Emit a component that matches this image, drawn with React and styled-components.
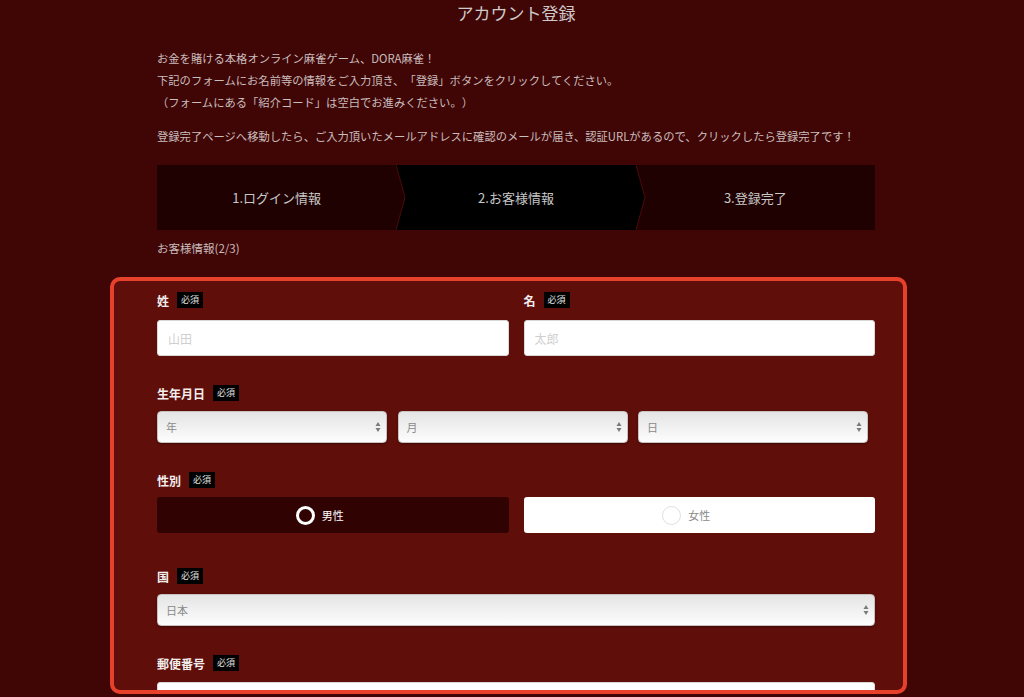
import React from 'react';
import styled, { createGlobalStyle } from 'styled-components';

const GlobalStyle = createGlobalStyle`
  body {
    margin: 0;
    background: #400606;
    font-family: "Noto Sans CJK JP", "Noto Sans", sans-serif;
    text-spacing-trim: space-all;
  }
`;

const Page = styled.div`
  padding-left: 8px;
`;

const Container = styled.main`
  width: 718px;
  margin: 0 auto;
`;

const Title = styled.h1`
  margin: 0;
  padding-top: 2px;
  font-size: 17px;
  line-height: 22px;
  font-weight: normal;
  color: #cfcaca;
  text-align: center;
`;

const Intro = styled.div`
  margin-top: 23px;
  p {
    margin: 0;
    font-size: 11.3px;
    line-height: 22px;
    color: #cabdbd;
  }
  p + p {
    margin-top: 12px;
  }
`;

const Steps = styled.ol`
  display: flex;
  height: 65px;
  margin: 18px 0 0;
  padding: 0;
  list-style: none;
`;

const Step = styled.li`
  position: relative;
  flex: 1;
  display: flex;
  align-items: center;
  justify-content: center;
  background: ${(p) => p.$bg};
  color: #c8c8c8;
  font-size: 13px;
`;

const Tip = styled.svg`
  position: absolute;
  top: 0;
  right: -10px;
  z-index: 1;
`;

const SubHeading = styled.div`
  margin-top: 10px;
  font-size: 11.5px;
  line-height: 16px;
  color: #cabdbd;
`;

const Panel = styled.form`
  position: relative;
  box-sizing: border-box;
  height: 417px;
  margin: 21px -32px 0 -47px;
  padding: 15px 32px 0 47px;
  background: #5f0e09;
  border-radius: 10px;
  &::after {
    content: '';
    position: absolute;
    inset: 0;
    border: 4px solid #e8412b;
    border-radius: 10px;
    pointer-events: none;
    z-index: 2;
  }
`;

const Field = styled.div`
  margin-bottom: ${(p) => p.$gap || 29}px;
`;

const LabelRow = styled.div`
  display: flex;
  align-items: center;
  gap: 8px;
  height: 16px;
  margin-bottom: ${(p) => p.$space || 10}px;
`;

const Label = styled.label`
  font-size: 12px;
  font-weight: bold;
  color: #f2eeee;
`;

const Badge = styled.span`
  height: 16px;
  line-height: 16px;
  padding: 0 4px;
  background: #000;
  color: #e0e0e0;
  font-size: 9px;
`;

const Pair = styled.div`
  display: grid;
  grid-template-columns: 1fr 1fr;
  gap: 15px;
`;

const Triple = styled.div`
  display: grid;
  grid-template-columns: repeat(3, 230px);
  gap: 10.5px;
`;

const TextInput = styled.input`
  box-sizing: border-box;
  width: 100%;
  height: 36px;
  padding: 0 10px;
  border: 1px solid #d8d8d8;
  border-radius: 3px;
  background: #fff;
  font-family: inherit;
  font-size: 12px;
  color: #333;
  outline: none;
  &::placeholder {
    color: #cfcfcf;
  }
`;

const SelectWrap = styled.div`
  position: relative;
`;

const Select = styled.select`
  box-sizing: border-box;
  width: 100%;
  height: 32px;
  padding: 0 20px 0 8px;
  appearance: none;
  border: 1px solid #c9c0c0;
  border-radius: 4px;
  background: linear-gradient(#e4e4e4, #fdfdfd);
  box-shadow: 0 1px 2px rgba(0, 0, 0, 0.35);
  font-family: inherit;
  font-size: 11px;
  color: #8a8a8a;
`;

const Arrows = styled.svg`
  position: absolute;
  right: 6px;
  top: 50%;
  transform: translateY(-50%);
  pointer-events: none;
`;

const RadioOption = styled.label`
  display: flex;
  align-items: center;
  justify-content: center;
  gap: 7px;
  height: 36px;
  padding-right: 26px;
  border-radius: 3px;
  background: ${(p) => (p.$checked ? '#300202' : '#fff')};
  color: ${(p) => (p.$checked ? '#fff' : '#8a8a8a')};
  font-size: 11px;
`;

const RadioCircle = styled.span`
  box-sizing: border-box;
  width: 19px;
  height: 19px;
  border-radius: 50%;
  border: ${(p) => (p.$checked ? '3.5px solid #fff' : '1px solid #e0e0e0')};
`;

const SelectBox = ({ children }) => (
  <SelectWrap>
    <Select defaultValue="">{children}</Select>
    <Arrows width="6" height="11" viewBox="0 0 6 11">
      <path d="M3 0.5 L5.5 4.5 H0.5 Z" fill="#7a7a7a" />
      <path d="M3 10.5 L5.5 6.5 H0.5 Z" fill="#7a7a7a" />
    </Arrows>
  </SelectWrap>
);

const StepTip = ({ fill }) => (
  <Tip width="10" height="65" viewBox="0 0 10 65">
    <polygon points="0,0 9,32.5 0,65" fill={fill} />
    <polyline points="0,0 9,32.5 0,65" fill="none" stroke="#4e0909" strokeWidth="1" />
  </Tip>
);

const Required = ({ label, space }) => (
  <LabelRow $space={space}>
    <Label>{label}</Label>
    <Badge>必須</Badge>
  </LabelRow>
);

const App = () => (
  <Page>
    <GlobalStyle />
    <Container>
      <Title>アカウント登録</Title>
      <Intro>
        <p>
          お金を賭ける本格オンライン麻雀ゲーム、DORA麻雀！
          <br />
          下記のフォームにお名前等の情報をご入力頂き、「登録」ボタンをクリックしてください。
          <br />
          （フォームにある「紹介コード」は空白でお進みください。）
        </p>
        <p>
          登録完了ページへ移動したら、ご入力頂いたメールアドレスに確認のメールが届き、認証URLがあるので、クリックしたら登録完了です！
        </p>
      </Intro>

      <Steps>
        <Step $bg="#1f0101">
          1.ログイン情報
          <StepTip fill="#1f0101" />
        </Step>
        <Step $bg="#000">
          2.お客様情報
          <StepTip fill="#000" />
        </Step>
        <Step $bg="#1f0101">3.登録完了</Step>
      </Steps>

      <SubHeading>お客様情報(2/3)</SubHeading>

      <Panel>
        <Field>
          <Pair>
            <div>
              <Required label="姓" space={12} />
              <TextInput placeholder="山田" />
            </div>
            <div>
              <Required label="名" space={12} />
              <TextInput placeholder="太郎" />
            </div>
          </Pair>
        </Field>

        <Field>
          <Required label="生年月日" />
          <Triple>
            <SelectBox>
              <option value="">年</option>
            </SelectBox>
            <SelectBox>
              <option value="">月</option>
            </SelectBox>
            <SelectBox>
              <option value="">日</option>
            </SelectBox>
          </Triple>
        </Field>

        <Field $gap={35}>
          <Required label="性別" space={9} />
          <Pair>
            <RadioOption $checked>
              <RadioCircle $checked />
              男性
            </RadioOption>
            <RadioOption>
              <RadioCircle />
              女性
            </RadioOption>
          </Pair>
        </Field>

        <Field>
          <Required label="国" />
          <SelectBox>
            <option value="">日本</option>
          </SelectBox>
        </Field>

        <Field>
          <Required label="郵便番号" space={11} />
          <TextInput placeholder="1234567（ハイフンなし）" />
        </Field>
      </Panel>
    </Container>
  </Page>
);

export default App;
